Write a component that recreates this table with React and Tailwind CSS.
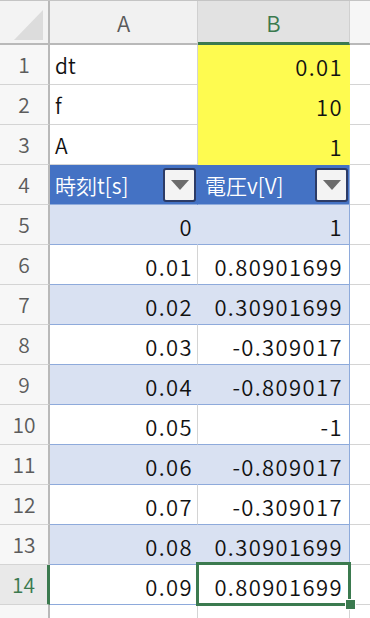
const font = { fontFamily: '"Noto Sans CJK JP", "Noto Sans", sans-serif' };

const rows = [
  { n: 1, a: 'dt', b: '0.01', kind: 'param' },
  { n: 2, a: 'f', b: '10', kind: 'param' },
  { n: 3, a: 'A', b: '1', kind: 'param' },
  { n: 4, a: '時刻t[s]', b: '電圧v[V]', kind: 'head' },
  { n: 5, a: '0', b: '1', kind: 'band' },
  { n: 6, a: '0.01', b: '0.80901699', kind: 'plain' },
  { n: 7, a: '0.02', b: '0.30901699', kind: 'band' },
  { n: 8, a: '0.03', b: '-0.309017', kind: 'plain' },
  { n: 9, a: '0.04', b: '-0.809017', kind: 'band' },
  { n: 10, a: '0.05', b: '-1', kind: 'plain' },
  { n: 11, a: '0.06', b: '-0.809017', kind: 'band' },
  { n: 12, a: '0.07', b: '-0.309017', kind: 'plain' },
  { n: 13, a: '0.08', b: '0.30901699', kind: 'band' },
  { n: 14, a: '0.09', b: '0.80901699', kind: 'plain', selected: true },
];

function FilterButton() {
  return (
    <div className="mr-px flex h-[34px] w-[33px] shrink-0 items-center justify-center rounded-[3px] border-2 border-[#2c3b66] bg-[#f3f3f3]">
      <svg width="18" height="10" viewBox="0 0 18 10">
        <path d="M0 0 H18 L9 10 Z" fill="#6b6b6b" />
      </svg>
    </div>
  );
}

function RowHeader({ n, selected }) {
  return (
    <div
      className={`flex w-[50px] shrink-0 items-center justify-center border-b border-b-[#d4d4d4] text-[21px] ${
        selected
          ? 'border-r-[3px] border-r-[#3b7a4f] bg-[#e9e9e9] text-[#3b7a4f]'
          : 'border-r-2 border-r-[#b9b9b9] bg-[#f7f7f7] text-[#5c5c5c]'
      }`}
    >
      {n}
    </div>
  );
}

// numbers in the sheet are drawn a little wider than the default font
const num = 'text-[22px] tracking-[1.4px]';

function Row({ row }) {
  const { kind } = row;

  let aCls = '';
  let bCls = '';
  if (kind === 'param') {
    aCls = 'bg-white border-r-[#d4d4d4] border-b-[#d4d4d4] justify-start pl-[5px]';
    bCls = 'bg-[#fefb50] border-r-[#fefb50] border-b-[#fefb50] justify-end pr-[6px]';
  } else if (kind === 'head') {
    aCls = 'bg-[#4472c4] border-r-[#4472c4] border-b-[#8eaadb] justify-between pl-[5px] text-white';
    bCls = 'bg-[#4472c4] border-r-[#8eaadb] border-b-[#8eaadb] justify-between pl-[7px] text-white';
  } else if (kind === 'band') {
    aCls = 'bg-[#d9e1f2] border-r-[#d9e1f2] border-b-[#8eaadb] justify-end pr-[4px]';
    bCls = 'bg-[#d9e1f2] border-r-[#8eaadb] border-b-[#8eaadb] justify-end pr-[6px]';
  } else {
    aCls = 'bg-white border-r-[#d4d4d4] border-b-[#8eaadb] justify-end pr-[4px]';
    bCls = 'bg-white border-r-[#8eaadb] border-b-[#8eaadb] justify-end pr-[6px]';
  }

  const isHead = kind === 'head';
  const aText = kind === 'param' || isHead ? 'text-[21px]' : num;
  const bText = isHead ? 'text-[21px]' : num;

  return (
    <div className="flex h-[40px]">
      <RowHeader n={row.n} selected={row.selected} />
      <div className={`flex w-[148px] shrink-0 items-center border-r border-b text-[#111] ${aCls}`}>
        <span className={`pt-[3px] ${aText}`}>{row.a}</span>
        {isHead && <FilterButton />}
      </div>
      <div className={`relative flex w-[152px] shrink-0 items-center border-r border-b text-[#111] ${bCls}`}>
        <span className={`pt-[3px] ${bText}`}>{row.b}</span>
        {isHead && <FilterButton />}
        {row.selected && (
          <>
            <div className="pointer-events-none absolute -top-[3px] -left-[2px] -right-[2px] -bottom-[2px] border-[3px] border-[#3b7a4f]" />
            <div className="absolute -right-[7px] -bottom-[6px] h-[11px] w-[11px] border border-white bg-[#3b7a4f]" />
          </>
        )}
      </div>
      <div className="flex-1 border-b border-b-[#d4d4d4] bg-white" />
    </div>
  );
}

export default function App() {
  return (
    <div className="h-[618px] w-[370px] overflow-hidden bg-white font-[350]" style={font}>
      <div className="h-px bg-[#c4c4c4]" />
      {/* column headers */}
      <div className="flex h-[44px]">
        <div className="relative w-[50px] shrink-0 border-r-2 border-b-2 border-[#b9b9b9] bg-[#f3f3f3]">
          <svg className="absolute left-[14px] top-[9px]" width="29" height="30" viewBox="0 0 29 30">
            <path d="M29 0 V30 H0 Z" fill="#dcdcdc" />
          </svg>
        </div>
        <div className="flex w-[148px] shrink-0 items-center justify-center border-r border-b-2 border-r-[#d0d0d0] border-b-[#b9b9b9] bg-[#f1f1f1] text-[22px] text-[#5a5a5a]">
          A
        </div>
        <div className="flex w-[152px] shrink-0 items-center justify-center border-r border-b-[3px] border-r-[#d0d0d0] border-b-[#3b7a4f] bg-[#e2e2e2] pt-[2px] text-[22px] text-[#3b7a4f]">
          B
        </div>
        <div className="flex-1 border-b-2 border-b-[#b9b9b9] bg-[#f6f6f6]" />
      </div>
      {rows.map((r) => (
        <Row key={r.n} row={r} />
      ))}
      <div className="flex h-[40px]">
        <RowHeader n={15} />
        <div className="w-[148px] shrink-0 border-r border-b border-[#d4d4d4]" />
        <div className="w-[152px] shrink-0 border-r border-b border-[#d4d4d4]" />
        <div className="flex-1 border-b border-[#d4d4d4]" />
      </div>
    </div>
  );
}
